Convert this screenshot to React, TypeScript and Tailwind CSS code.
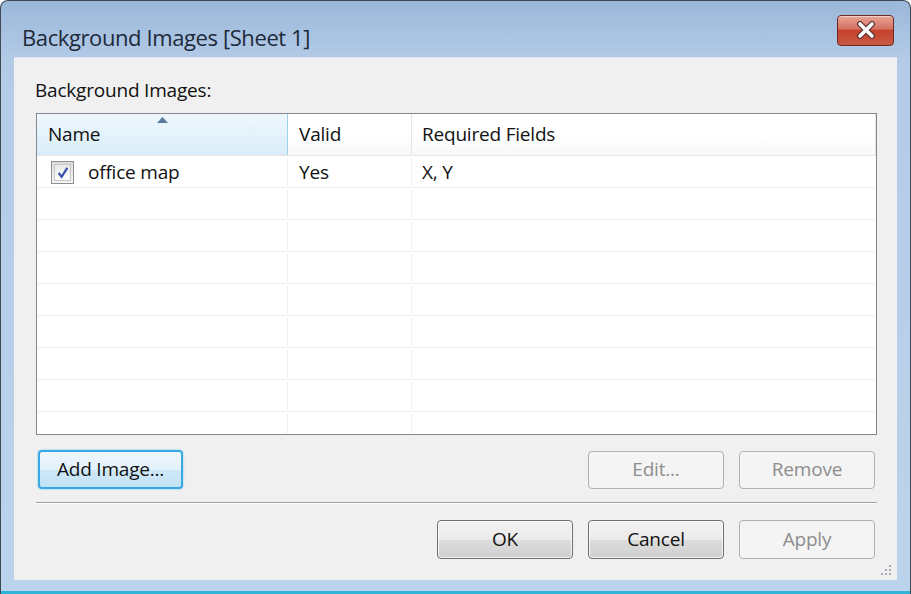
import React from "react";

const font = { fontFamily: '"Open Sans", "Noto Sans", sans-serif' };

function CloseButton() {
  return (
    <div className="w-[57px] h-[31px] rounded-[4px] border border-[#6e2a22] bg-[linear-gradient(#e6a597_0%,#d5705f_45%,#c4412c_50%,#c85a43_100%)] shadow-[inset_0_1px_0_rgba(255,255,255,0.5)] flex items-center justify-center">
      <svg width="22" height="18" viewBox="0 0 22 18">
        <path d="M5 3 L17 15 M17 3 L5 15" stroke="#5a3030" strokeWidth="6" strokeLinecap="round" />
        <path d="M5 3 L17 15 M17 3 L5 15" stroke="#ffffff" strokeWidth="3.6" strokeLinecap="round" />
      </svg>
    </div>
  );
}

function Checkbox() {
  return (
    <div className="w-[23px] h-[23px] border border-[#8e8f8f] bg-[linear-gradient(#dcdcdc,#f6f6f6)] p-[2px]">
      <div className="w-full h-full border border-[#c6c6c6] bg-[linear-gradient(#e9e9e9,#fdfdfd)] flex items-center justify-center">
        <svg width="14" height="14" viewBox="0 0 13 13">
          <path d="M2.5 6.5 L5.2 10 L10.5 1.8" stroke="#3551a8" strokeWidth="2" fill="none" />
        </svg>
      </div>
    </div>
  );
}

function Button({ label, disabled, focused, className }: { label: string; disabled?: boolean; focused?: boolean; className?: string }) {
  let style =
    "border border-[#707070] bg-[linear-gradient(#f2f2f2_0%,#ebebeb_50%,#dddddd_51%,#cfcfcf_100%)] text-[#111] shadow-[inset_0_0_0_1px_rgba(255,255,255,0.7)]";
  if (disabled) style = "border border-[#adb2b5] bg-[#f4f4f4] text-[#8d8d8d]";
  if (focused)
    style =
      "border-2 border-[#38a7e2] bg-[linear-gradient(#eef7fd_0%,#e3f1fb_50%,#cfe8f8_51%,#c2e2f6_100%)] text-[#111] shadow-[0_0_2px_#5fc0ee]";
  return (
    <div className={"h-[38px] rounded-[4px] flex items-center justify-center text-[19px] tracking-[-0.2px] " + style + " " + (className ?? "")}>
      {label}
    </div>
  );
}

const rows = Array.from({ length: 9 });

export default function App() {
  return (
    <div className="w-[911px] h-[594px] bg-white overflow-hidden" style={font}>
      <div className="w-[911px] h-[594px] rounded-t-[8px] border border-[#3f4a57] border-b-0 bg-[linear-gradient(#9bb7d9_0%,#b3cbe7_10%,#bcd3ed_100%)] flex flex-col">
        {/* title bar */}
        <div className="h-[56px] flex items-center justify-between pl-[21px] pr-[16px] pt-[2px]">
          <span className="text-[22px] text-[#1d2a3a] tracking-[-0.4px] mt-[14px]">Background Images [Sheet 1]</span>
          <CloseButton />
        </div>

        {/* client */}
        <div className="mx-[13px] w-[883px] h-[523px] bg-[#f0f0f0] border-t border-[#dfe8f2] flex flex-col pl-[22px] pr-[20px] relative">
          <div className="mt-[19px] ml-[-1px] h-[26px] leading-[26px] text-[19px] tracking-[-0.2px] text-[#111]">Background Images:</div>

          {/* list */}
          <div className="mt-[10px] h-[322px] border border-[#828790] bg-white overflow-hidden">
            <div className="h-[42px] flex border-b border-[#e5e5e5] bg-[linear-gradient(#ffffff_0%,#ffffff_50%,#f7f8f9_100%)] text-[19px] tracking-[-0.2px] text-[#111]">
              <div className="w-[251px] relative border-r border-[#9ed1ee] bg-[linear-gradient(#eef8fd_0%,#e3f2fb_50%,#d9edf9_100%)] flex items-center pl-[11px]">
                <svg className="absolute left-[120px] top-[3px]" width="11" height="6" viewBox="0 0 11 6">
                  <path d="M0 6 L5.5 0 L11 6 Z" fill="#5b7b9c" />
                </svg>
                Name
              </div>
              <div className="w-[124px] border-r border-[#e5e5e5] flex items-center pl-[11px]">Valid</div>
              <div className="flex-1 border-r border-[#e5e5e5] flex items-center pl-[10px]">Required Fields</div>
            </div>
            {rows.map((_, i) => (
              <div key={i} className="h-[32px] flex border-b border-[#f0f0f0] text-[19px] tracking-[-0.2px] text-[#111] pt-[2px]">
                <div className="w-[251px] border-r border-[#f0f0f0] flex items-center pl-[14px] gap-[14px]">
                  {i === 0 && (
                    <>
                      <Checkbox />
                      <span>office map</span>
                    </>
                  )}
                </div>
                <div className="w-[124px] border-r border-[#f0f0f0] flex items-center pl-[11px]">{i === 0 ? "Yes" : ""}</div>
                <div className="flex-1 flex items-center pl-[10px]">{i === 0 ? "X, Y" : ""}</div>
              </div>
            ))}
          </div>

          {/* action row */}
          <div className="mt-[15px] flex items-center">
            <Button label="Add Image..." focused className="w-[145px] ml-[2px] h-[39px]" />
            <div className="flex-1" />
            <Button label="Edit..." disabled className="w-[136px]" />
            <Button label="Remove" disabled className="w-[136px] ml-[15px] mr-[2px]" />
          </div>

          <div className="mt-[13px] h-[2px] border-t border-[#a0a0a0] border-b border-b-white" />

          {/* dialog buttons */}
          <div className="mt-[16px] flex items-center justify-end">
            <Button label="OK" className="w-[136px] h-[39px]" />
            <Button label="Cancel" className="w-[136px] h-[39px] ml-[15px]" />
            <Button label="Apply" disabled className="w-[136px] h-[39px] ml-[15px] mr-[2px]" />
          </div>

          {/* size grip */}
          <svg className="absolute right-[4px] bottom-[3px]" width="14" height="14" viewBox="0 0 14 14">
            {[
              [10, 2],
              [6, 6],
              [10, 6],
              [2, 10],
              [6, 10],
              [10, 10],
            ].map(([x, y], k) => (
              <rect key={k} x={x} y={y} width="2" height="2" fill="#a7aeb8" />
            ))}
          </svg>
        </div>

        <div className="flex-1 border-b-[3px] border-[#2fb3d6]" />
      </div>
    </div>
  );
}
